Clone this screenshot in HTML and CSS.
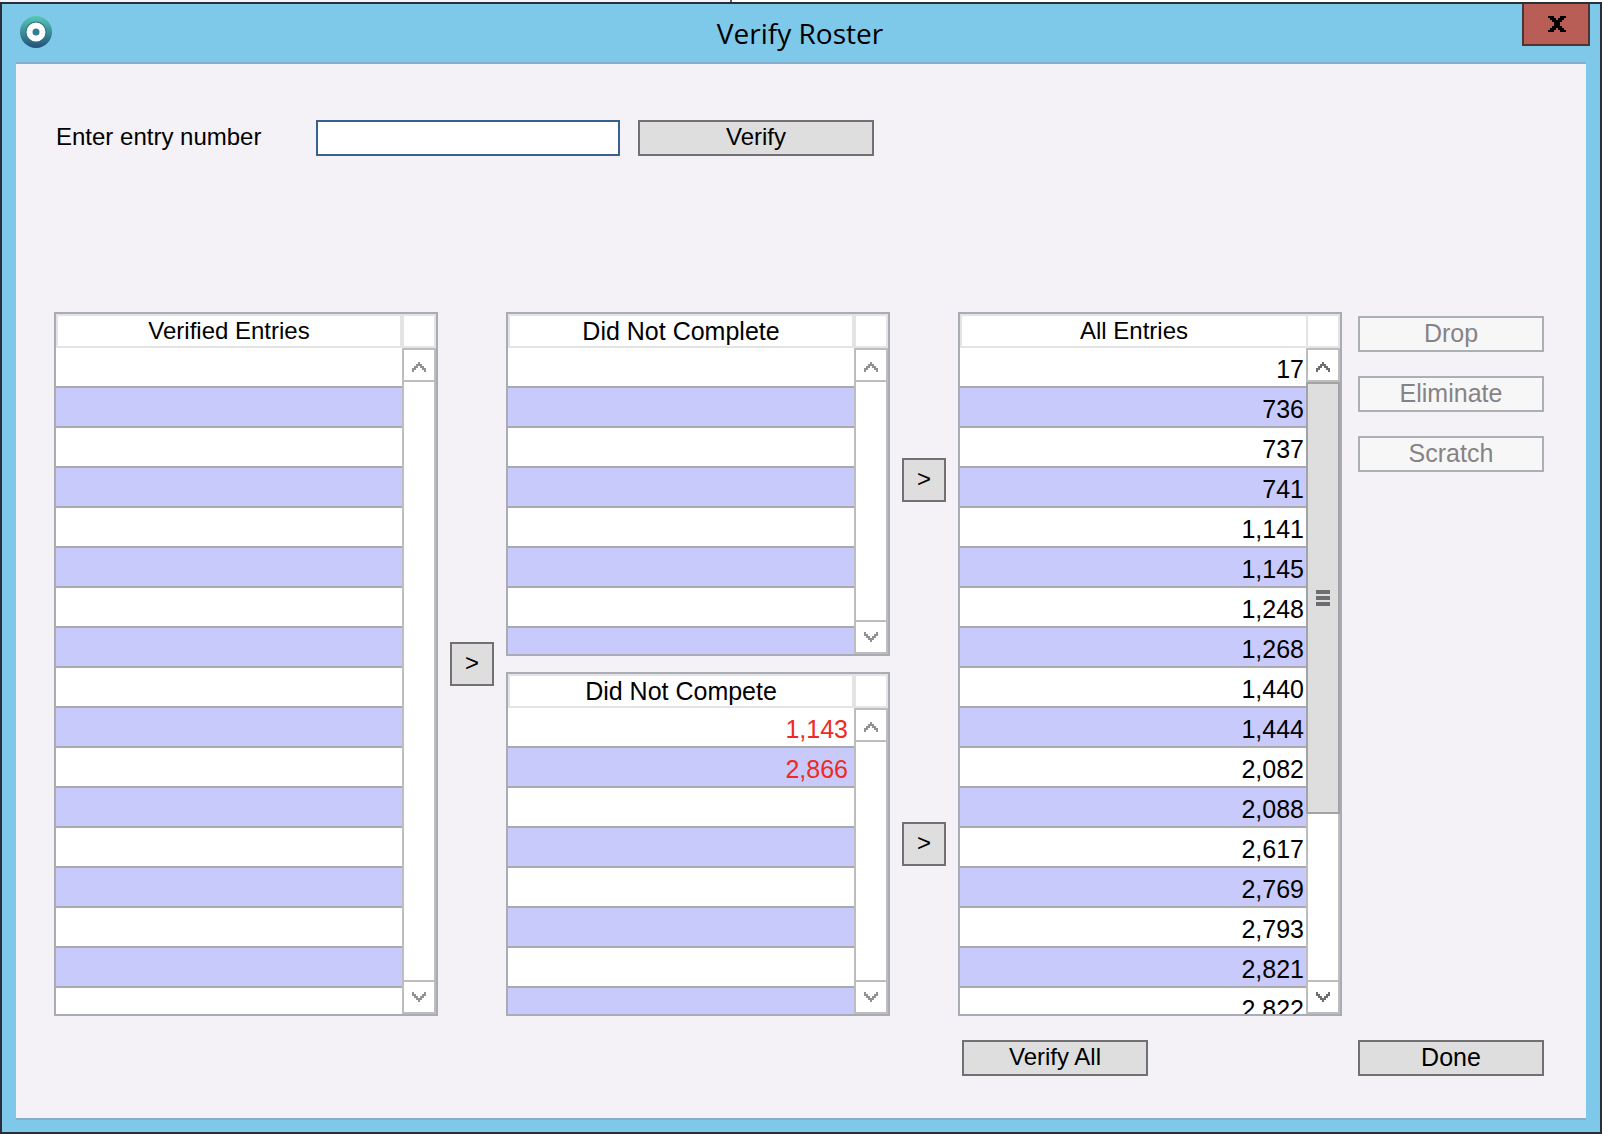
FILE: index.html
```html
<!DOCTYPE html>
<html lang="en">
<head>
<meta charset="utf-8">
<title>Verify Roster</title>
<link rel="stylesheet" href="styles.css">
</head>
<body>
<svg width="0" height="0" class="defs" aria-hidden="true">
  <symbol id="up" viewBox="0 0 14 10"><path d="M6 0h2v2h2v2h2v2h2v4h-2V8h-2V6H8V4H6v2H4v2H2v2H0V6h2V4h2V2h2z"/></symbol>
  <symbol id="down" viewBox="0 0 14 10"><path d="M6 10h2V8h2V6h2V4h2V0h-2v2h-2v2H8v2H6V4H4V2H2V0H0v4h2v2h2v2h2z"/></symbol>
</svg>
<div class="screen">
  <div class="behind"><div class="behind-pane"></div></div>
  <div class="window">
    <header class="titlebar">
      <svg class="app-icon" viewBox="0 0 32 32" aria-hidden="true">
        <defs><linearGradient id="disc" x1="0" y1="0" x2="0" y2="1"><stop offset="0" stop-color="#58c9b4"/><stop offset="0.5" stop-color="#3b8e98"/><stop offset="1" stop-color="#235079"/></linearGradient></defs>
        <circle cx="16" cy="16" r="16" fill="url(#disc)"/>
        <circle cx="16" cy="16" r="10.500" fill="#2b6f86"/>
        <circle cx="16" cy="16" r="6.500" fill="#347f92" stroke="#fff" stroke-width="6"/>
      </svg>
      <h1 class="title">Verify Roster</h1>
      <button class="close" type="button" aria-label="Close">
        <svg width="18" height="16" viewBox="0 0 18 16"><path d="M0 0h6v2h2v2h2V2h2V0h6v2h-2v2h-2v2h-2v4h2v2h2v2h2v2h-6v-2h-2v-2H8v2H6v2H0v-2h2v-2h2v-2h2V6H4V4H2V2H0z"/></svg>
      </button>
    </header>
    <main class="content">
      <form class="entry-form">
        <label class="entry-label" for="entry">Enter entry number</label>
        <input class="entry-input" id="entry" type="text">
        <button class="btn btn-verify" type="button">Verify</button>
      </form>
      <div class="lists">
        <section class="panel">
          <div class="viewport">
            <table class="grid">
              <thead><tr><th>Verified Entries</th></tr></thead>
              <tbody>
                <tr><td></td></tr><tr><td></td></tr><tr><td></td></tr><tr><td></td></tr>
                <tr><td></td></tr><tr><td></td></tr><tr><td></td></tr><tr><td></td></tr>
                <tr><td></td></tr><tr><td></td></tr><tr><td></td></tr><tr><td></td></tr>
                <tr><td></td></tr><tr><td></td></tr><tr><td></td></tr><tr><td></td></tr>
                <tr><td></td></tr>
              </tbody>
            </table>
          </div>
          <div class="side">
            <div class="corner"></div>
            <div class="scrollbar">
              <button class="step" type="button" aria-label="Scroll up"><svg class="chevron"><use href="#up"/></svg></button>
              <div class="track"></div>
              <button class="step" type="button" aria-label="Scroll down"><svg class="chevron"><use href="#down"/></svg></button>
            </div>
          </div>
        </section>
        <div class="movers movers-center">
          <button class="btn mover" type="button">&gt;</button>
        </div>
        <div class="stack">
          <section class="panel">
            <div class="viewport">
              <table class="grid">
                <thead><tr><th>Did Not Complete</th></tr></thead>
                <tbody>
                  <tr><td></td></tr><tr><td></td></tr><tr><td></td></tr><tr><td></td></tr>
                  <tr><td></td></tr><tr><td></td></tr><tr><td></td></tr><tr><td></td></tr>
                </tbody>
              </table>
            </div>
            <div class="side">
              <div class="corner"></div>
              <div class="scrollbar">
                <button class="step" type="button" aria-label="Scroll up"><svg class="chevron"><use href="#up"/></svg></button>
                <div class="track"></div>
                <button class="step" type="button" aria-label="Scroll down"><svg class="chevron"><use href="#down"/></svg></button>
              </div>
            </div>
          </section>
          <section class="panel">
            <div class="viewport">
              <table class="grid grid-alert">
                <thead><tr><th>Did Not Compete</th></tr></thead>
                <tbody>
                  <tr><td>1,143</td></tr><tr><td>2,866</td></tr><tr><td></td></tr><tr><td></td></tr>
                  <tr><td></td></tr><tr><td></td></tr><tr><td></td></tr><tr><td></td></tr>
                </tbody>
              </table>
            </div>
            <div class="side">
              <div class="corner"></div>
              <div class="scrollbar">
                <button class="step" type="button" aria-label="Scroll up"><svg class="chevron"><use href="#up"/></svg></button>
                <div class="track"></div>
                <button class="step" type="button" aria-label="Scroll down"><svg class="chevron"><use href="#down"/></svg></button>
              </div>
            </div>
          </section>
        </div>
        <div class="movers movers-pair">
          <button class="btn mover" type="button">&gt;</button>
          <button class="btn mover" type="button">&gt;</button>
        </div>
        <section class="panel panel-active">
          <div class="viewport">
            <table class="grid">
              <thead><tr><th>All Entries</th></tr></thead>
              <tbody>
                <tr><td>17</td></tr>
                <tr><td>736</td></tr>
                <tr><td>737</td></tr>
                <tr><td>741</td></tr>
                <tr><td>1,141</td></tr>
                <tr><td>1,145</td></tr>
                <tr><td>1,248</td></tr>
                <tr><td>1,268</td></tr>
                <tr><td>1,440</td></tr>
                <tr><td>1,444</td></tr>
                <tr><td>2,082</td></tr>
                <tr><td>2,088</td></tr>
                <tr><td>2,617</td></tr>
                <tr><td>2,769</td></tr>
                <tr><td>2,793</td></tr>
                <tr><td>2,821</td></tr>
                <tr><td>2,822</td></tr>
              </tbody>
            </table>
          </div>
          <div class="side">
            <div class="corner"></div>
            <div class="scrollbar">
              <button class="step" type="button" aria-label="Scroll up"><svg class="chevron"><use href="#up"/></svg></button>
              <div class="track">
                <div class="thumb"><span class="grip"></span><span class="grip"></span><span class="grip"></span></div>
              </div>
              <button class="step" type="button" aria-label="Scroll down"><svg class="chevron"><use href="#down"/></svg></button>
            </div>
          </div>
        </section>
        <div class="actions">
          <button class="btn" type="button" disabled>Drop</button>
          <button class="btn" type="button" disabled>Eliminate</button>
          <button class="btn" type="button" disabled>Scratch</button>
        </div>
      </div>
      <footer class="footer">
        <button class="btn verify-all" type="button">Verify All</button>
        <button class="btn done" type="button">Done</button>
      </footer>
    </main>
  </div>
</div>
</body>
</html>
```
FILE: styles.css
```css
* { box-sizing: border-box; }

body {
  margin: 0;
  font-family: "Liberation Sans", Arial, sans-serif;
  font-size: 25px;
  color: #000;
  background: #fff;
}

button, input { font: inherit; color: inherit; margin: 0; padding: 0; border-radius: 0; }

.defs { position: absolute; }

.screen { display: flex; flex-direction: column; height: 100vh; min-height: 800px; }

/* sliver of the page behind the dialog */
.behind { flex: none; height: 2px; background: #fff; }
.behind-pane { width: 732px; height: 2px; background: #f5f5f8; border-right: 2px solid #55565c; }

.window {
  flex: 1;
  min-height: 0;
  display: flex;
  flex-direction: column;
  border: 2px solid #2a2e36;
  background: #7ec8ea;
  padding: 0 14px 12px;
}

.titlebar {
  flex: none;
  height: 58px;
  display: grid;
  grid-template-columns: 62px 1fr 68px;
  align-items: center;
  margin-right: -4px;
}
.app-icon { width: 32px; height: 32px; margin: 0 0 2px 4px; }
.title {
  margin: 0;
  text-align: center;
  font: 400 28px/58px "Open Sans", "Noto Sans", sans-serif;
}
.close {
  align-self: start;
  height: 42px;
  display: flex;
  align-items: center;
  justify-content: center;
  padding-left: 2px;
  border: 2px solid #4f3432;
  border-top: 0;
  background: #b85e57;
}

.content {
  flex: 1;
  min-height: 0;
  display: flex;
  flex-direction: column;
  border: solid #86aecb;
  border-width: 2px 0;
  background: #f4f2f6;
  padding: 56px 42px 42px 38px;
}

.entry-form { flex: none; display: flex; height: 36px; margin-bottom: 156px; }
.entry-label { width: 262px; padding-left: 2px; font-size: 24px; line-height: 34px; }
.entry-input { width: 304px; margin-right: 18px; padding: 0 6px; border: 2px solid #39618f; background: #fff; }

.btn {
  width: 186px;
  height: 36px;
  border: 2px solid #727073;
  background: #dedede;
  text-align: center;
  line-height: 30px;
  padding-bottom: 2px;
}
.btn:disabled { border-color: #acb0b4; background: #f7f7f7; color: #868387; }
.btn-verify { width: 236px; }
.btn-verify, .verify-all { font-size: 24px; }

.lists {
  flex: 1;
  min-height: 0;
  display: grid;
  grid-template-columns: 1fr 68px 1fr 68px 1fr 16px 186px;
  grid-template-rows: minmax(0, 1fr);
}

.panel {
  flex: 1;
  min-height: 0;
  display: grid;
  grid-template-columns: minmax(0, 1fr) 34px;
  grid-template-rows: minmax(0, 1fr);
  border: 2px solid #a9acb4;
  background: #fff;
}
.stack { display: flex; flex-direction: column; gap: 16px; min-height: 0; }
.viewport { overflow: hidden; }

.grid { width: 100%; border-spacing: 0; }
.grid th {
  height: 34px;
  padding: 0;
  border: 2px solid #e4e3e6;
  font-weight: 400;
  line-height: 30px;
}
.lists > .panel th { font-size: 24px; }
.panel-active .grid th { border-right: 0; }
.grid td {
  height: 40px;
  padding: 4px 2px 0 0;
  border-bottom: 2px solid #aaaaad;
  line-height: 34px;
  text-align: right;
}
.grid tr:nth-child(even) td { background: #c7cafa; }
.grid-alert td { color: #ee2a24; padding-right: 6px; }

.side { display: flex; flex-direction: column; }
.corner { flex: none; height: 34px; border: 2px solid #e4e3e6; }
.scrollbar { flex: 1; min-height: 0; display: flex; flex-direction: column; }
.step {
  flex: none;
  height: 34px;
  display: flex;
  align-items: center;
  justify-content: center;
  border: 2px solid #bdbdbe;
  background: #fff;
}
.step:first-child { padding-top: 4px; }
.chevron { width: 14px; height: 10px; fill: #929294; }
.panel-active .chevron { fill: #6e6e70; }
.track { flex: 1; border: solid #bdbdbe; border-width: 0 2px; }
.panel-active .track { border-width: 0; background: linear-gradient(90deg, #bdbdbe 2px, #fff 2px 32px, #bdbdbe 32px); }
.thumb {
  height: 72.25%;
  display: flex;
  flex-direction: column;
  align-items: center;
  justify-content: center;
  gap: 2px;
  border: 2px solid #a2a3a7;
  background: #dedede;
}
.grip { width: 14px; height: 4px; background: #6e6e70; }

.movers { display: flex; flex-direction: column; align-items: center; }
.movers-center { justify-content: center; }
.movers-pair { padding-top: 146px; gap: 320px; }
.mover { width: 44px; height: 44px; font-size: 24px; }

.actions { grid-column: 7; display: flex; flex-direction: column; gap: 24px; padding-top: 4px; }

.footer {
  flex: none;
  display: grid;
  grid-template-columns: 1fr 68px 1fr 68px 1fr 16px 186px;
  margin-top: 24px;
}
.verify-all { grid-column: 5; margin-left: 4px; }
.done { grid-column: 7; }
```
